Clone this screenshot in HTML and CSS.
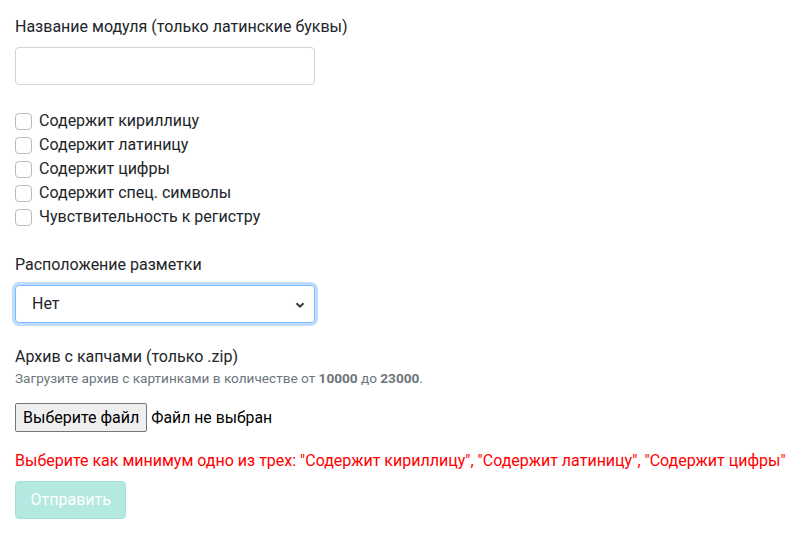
FILE: index.html
```html
<!DOCTYPE html>
<html lang="ru">
<head>
<meta charset="utf-8">
<link rel="stylesheet" href="styles.css">
</head>
<body>
<form class="form">
  <div class="group group-name">
    <label class="label">Название модуля (только латинские буквы)</label>
    <input class="control" type="text">
  </div>
  <div class="checks">
    <label class="check"><span class="box"></span>Содержит кириллицу</label>
    <label class="check"><span class="box"></span>Содержит латиницу</label>
    <label class="check"><span class="box"></span>Содержит цифры</label>
    <label class="check"><span class="box"></span>Содержит спец. символы</label>
    <label class="check"><span class="box"></span>Чувствительность к регистру</label>
  </div>
  <div class="group group-select">
    <label class="label">Расположение разметки</label>
    <div class="select focus">
      <span class="select-value">Нет</span>
      <svg class="chevron" width="10" height="8" viewBox="0 0 10 8"><path d="M1.5 2.2 L5 5.6 L8.5 2.2" fill="none" stroke="#343a40" stroke-width="2"/></svg>
    </div>
  </div>
  <div class="group group-file">
    <label class="label label-tight">Архив с капчами (только .zip)</label>
    <small class="help">Загрузите архив с картинками в количестве от <b>10000</b> до <b>23000</b>.</small>
    <div class="file">
      <span class="file-btn">Выберите файл</span>
      <span class="file-name">Файл не выбран</span>
    </div>
  </div>
  <p class="error">Выберите как минимум одно из трех: "Содержит кириллицу", "Содержит латиницу", "Содержит цифры"</p>
  <button class="submit" type="button" disabled>Отправить</button>
</form>
</body>
</html>
```
FILE: styles.css
```css
* { box-sizing: border-box; }
html, body { margin: 0; padding: 0; background: #fff; }
body {
  font-family: Roboto, "Noto Sans", sans-serif;
  font-size: 16px;
  line-height: 24px;
  color: #212529;
}
.form {
  padding: 15px 15px 0 15px;
  display: flex;
  flex-direction: column;
  align-items: flex-start;
}
.group { display: flex; flex-direction: column; align-items: flex-start; }
.label { display: block; margin-bottom: 8px; }
.label-tight { margin-bottom: 0; }
.control {
  width: 300px;
  height: 38px;
  border: 1px solid #ced4da;
  border-radius: 4px;
  background: #fff;
  font: inherit;
  padding: 6px 12px;
  outline: none;
}
.group-name { margin-bottom: 24px; }
.checks { display: flex; flex-direction: column; margin-bottom: 24px; }
.check { display: flex; align-items: center; height: 24px; }
.box {
  width: 17px;
  height: 17px;
  border: 1px solid #b6bbc0;
  border-radius: 4px;
  background: #fff;
  margin-right: 7px;
}
.select {
  position: relative;
  width: 300px;
  height: 38px;
  border: 1px solid #80bdff;
  border-radius: 4px;
  background: #fff;
  display: flex;
  align-items: center;
  padding-left: 16px;
}
.select.focus { box-shadow: 0 0 0 3px rgba(0, 123, 255, 0.25); }
.chevron { position: absolute; right: 9px; top: 15px; }
.group-select { margin-bottom: 22px; }
.help {
  display: block;
  font-size: 13.6px;
  line-height: 19px;
  color: #6c757d;
  margin-bottom: 15px;
}
.help b { font-weight: 700; }
.file { display: flex; align-items: center; }
.file-btn {
  display: inline-flex;
  align-items: center;
  height: 29px;
  padding: 0 7px;
  background: #efefef;
  border: 1px solid #767676;
  border-radius: 2px;
  color: #000;
  margin-right: 4px;
}
.file-name { color: #000; font-size: 15.8px; }
.error {
  margin: 17px 0 8px 0;
  color: #ff0000;
  white-space: nowrap;
}
.submit {
  height: 38px;
  padding: 0 14.5px;
  border: 1px solid #9fe3d7;
  border-radius: 4px;
  background: #b3e9e0;
  color: #fff;
  font: inherit;
}
```
